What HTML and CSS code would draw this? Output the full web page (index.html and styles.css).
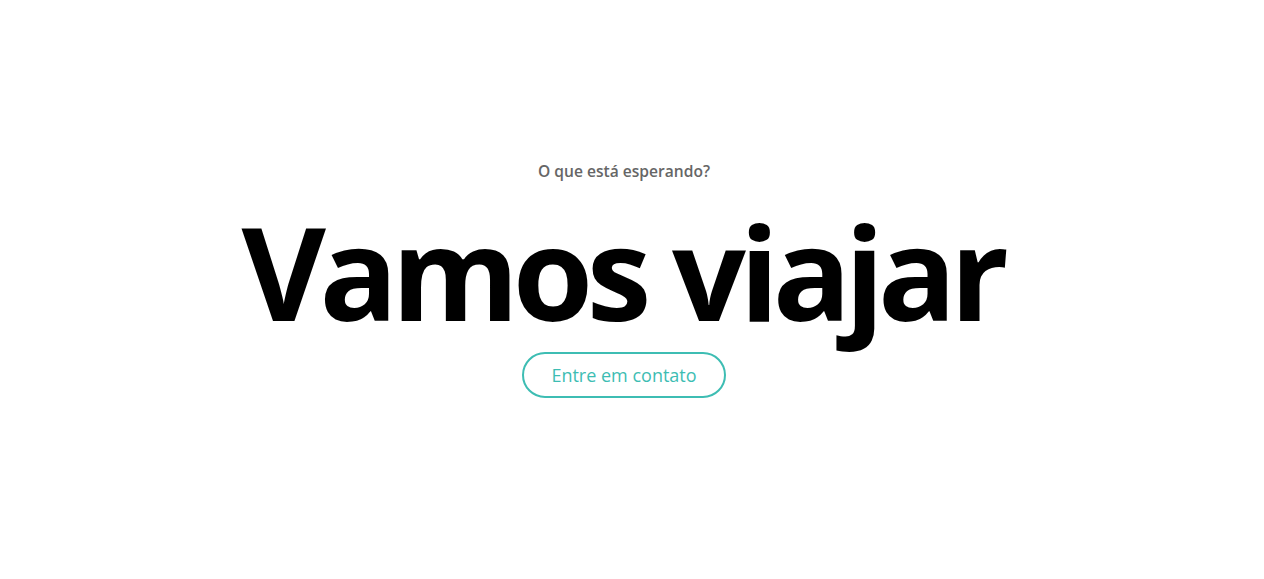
FILE: index.html
```html
<!DOCTYPE html>
<html lang="pt-BR">
<head>
<meta charset="utf-8">
<title>Vamos viajar</title>
<link rel="stylesheet" href="styles.css">
</head>
<body>
<main class="hero">
  <p class="eyebrow">O que está esperando?</p>
  <h1 class="title">Vamos viajar</h1>
  <a class="cta" href="#">Entre em contato</a>
</main>
</body>
</html>
```
FILE: styles.css
```css
html, body {
  margin: 0;
  padding: 0;
  background: #fff;
}
.hero {
  width: 1248px;
  height: 579px;
  display: flex;
  flex-direction: column;
  align-items: center;
  justify-content: flex-start;
  padding-top: 160px;
  box-sizing: border-box;
}
.eyebrow {
  margin: 0;
  font-family: "Open Sans", sans-serif;
  font-weight: 600;
  font-size: 15.6px;
  color: #666;
  line-height: 22px;
}
.title {
  margin: 34px 0 0;
  padding-right: 4px;
  font-family: "Open Sans", sans-serif;
  font-weight: 700;
  font-size: 130px;
  line-height: 110px;
  color: #000;
  letter-spacing: -6.5px;
}
.cta {
  margin-top: 26px;
  display: inline-flex;
  align-items: center;
  justify-content: center;
  width: 204px;
  height: 46px;
  box-sizing: border-box;
  border: 2px solid #3dbdb3;
  border-radius: 23px;
  font-family: "Open Sans", sans-serif;
  font-size: 18px;
  color: #3dbdb3;
  text-decoration: none;
}
```
